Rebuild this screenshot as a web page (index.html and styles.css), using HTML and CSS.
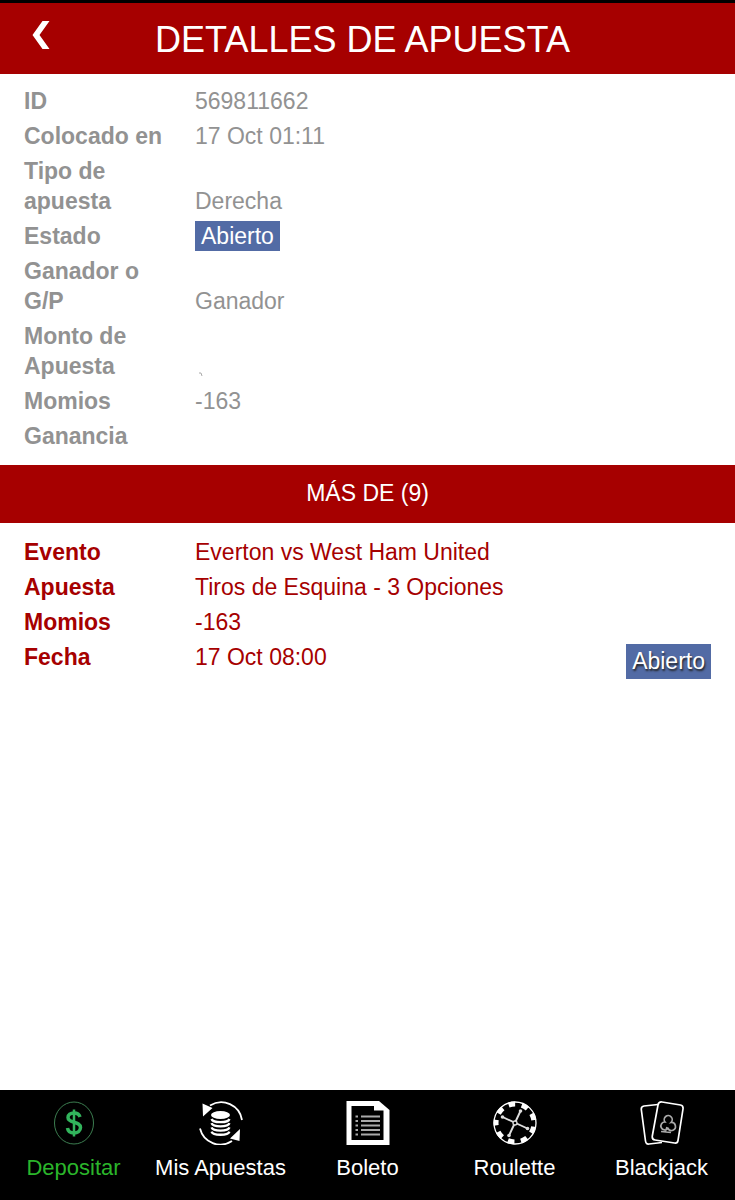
FILE: index.html
```html
<!DOCTYPE html>
<html lang="es">
<head>
    <meta charset="UTF-8">
    <meta name="viewport" content="width=device-width, initial-scale=1.0">
    <title>Detalles de apuesta</title>
    <link rel="stylesheet" href="styles.css">
</head>
<body>
    <header class="header">
        <button class="back" type="button" aria-label="Volver">
            <svg width="18" height="28" viewBox="0 0 18 28"><path d="M10.500 0H17.500L7.500 14L17.500 28H10.500L0.500 14Z" fill="#fff"/></svg>
        </button>
        <h1 class="title">DETALLES DE APUESTA</h1>
    </header>

    <main class="content">
        <dl class="details">
            <div class="row"><dt>ID</dt><dd>569811662</dd></div>
            <div class="row"><dt>Colocado en</dt><dd>17 Oct 01:11</dd></div>
            <div class="row"><dt>Tipo de apuesta</dt><dd>Derecha</dd></div>
            <div class="row"><dt>Estado</dt><dd><span class="badge">Abierto</span></dd></div>
            <div class="row"><dt>Ganador o G/P</dt><dd>Ganador</dd></div>
            <div class="row">
                <dt>Monto de Apuesta</dt>
                <dd><svg class="mark" width="10" height="5" viewBox="0 0 10 5"><path d="M4 1H6L7 4" fill="none" stroke="#aaa"/></svg></dd>
            </div>
            <div class="row"><dt>Momios</dt><dd>-163</dd></div>
            <div class="row"><dt>Ganancia</dt><dd></dd></div>
        </dl>

        <h2 class="section-title">MÁS DE (9)</h2>

        <section class="event">
            <dl class="event-list">
                <div class="row"><dt>Evento</dt><dd>Everton vs West Ham United</dd></div>
                <div class="row"><dt>Apuesta</dt><dd>Tiros de Esquina - 3 Opciones</dd></div>
                <div class="row"><dt>Momios</dt><dd>-163</dd></div>
                <div class="row"><dt>Fecha</dt><dd>17 Oct 08:00</dd></div>
            </dl>
            <span class="badge badge-large">Abierto</span>
        </section>
    </main>

    <nav class="nav">
        <a class="nav-item nav-active" href="#depositar">
            <svg class="icon" viewBox="0 0 44 44" fill="none">
                <ellipse cx="22" cy="22" rx="19.500" ry="21" stroke="#3c7d50"/>
                <path d="M28 16C27 12.500 24.500 12 22 12C18.500 12 16 13.800 16 16.600C16 23 28.500 19.500 28.500 26.600C28.500 30 25.500 32 22 32C18.500 32 16 30.500 15.500 27" stroke="#32b45c" stroke-width="3.500"/>
                <path d="M22 8.500V35.500" stroke="#32b45c" stroke-width="2.500"/>
            </svg>
            <span>Depositar</span>
        </a>
        <a class="nav-item" href="#apuestas">
            <svg class="icon" viewBox="0 0 44 44" fill="none">
                <path d="M11 4.500A21 21 0 0 1 43 19" stroke="#fff" stroke-width="1.800"/>
                <path d="M1 27.500A21 21 0 0 0 33 40" stroke="#fff" stroke-width="1.800"/>
                <path d="M3.500 2.500L13.500 7L4 15.500ZM41 28L31 37.500L40.500 40Z" fill="#fff"/>
                <ellipse cx="21.500" cy="14" rx="9.500" ry="4" fill="#fff"/>
                <path d="M12.500 18C14 22.200 29 22.200 30.500 18M12.500 22.200C14 26.400 29 26.400 30.500 22.200M12.500 26.400C14 30.600 29 30.600 30.500 26.400M12.500 30.600C14 34.800 29 34.800 30.500 30.600" stroke="#fff" stroke-width="2.300"/>
            </svg>
            <span>Mis Apuestas</span>
        </a>
        <a class="nav-item" href="#boleto">
            <svg class="icon" viewBox="0 0 44 44" fill="none">
                <path d="M.500 0H33L43.500 9V44H.500Z" fill="#fff"/>
                <path d="M5.500 5H28V9.500H37.500V39H5.500Z" fill="#000"/>
                <path d="M9.500 15.500H12M9.500 20H12M9.500 24.500H12M9.500 29H12M9.500 33.500H12M15 15.500H34M15 20H34M15 24.500H34M15 29H34M15 33.500H34" stroke="#aaa" stroke-width="2.200"/>
            </svg>
            <span>Boleto</span>
        </a>
        <a class="nav-item" href="#roulette">
            <svg class="icon" viewBox="0 0 44 44" fill="none">
                <circle cx="22" cy="22" r="21" stroke="#fff" stroke-width="1.300"/>
                <circle cx="22" cy="22" r="19" stroke="#fff" stroke-width="5" stroke-dasharray="6.600 6.664" stroke-dashoffset="3.300" transform="rotate(180 22 22)"/>
                <path d="M27.500 10L16 34.500M9.500 16L34.500 27.500" stroke="#ddd" stroke-width="1.900"/>
                <circle cx="22" cy="22" r="2" fill="#000" stroke="#ddd" stroke-width="1.300"/>
                <g fill="#ddd"><circle cx="27.500" cy="10" r="1.800"/><circle cx="16" cy="34.500" r="1.800"/><circle cx="9.500" cy="16" r="1.800"/><circle cx="34.500" cy="27.500" r="1.800"/></g>
            </svg>
            <span>Roulette</span>
        </a>
        <a class="nav-item" href="#blackjack">
            <svg class="icon" viewBox="0 0 44 44" fill="none" stroke="#fff" stroke-width="1.700">
                <path d="M18 3.500L4 5Q1 5.500 1.300 8.500L5.500 40Q6 43.500 9 43L22 41.500"/>
                <path d="M22 1L40.500 4Q43.500 4.600 43 8L38 39.500Q37.500 42.500 34.500 42L15 39Q11.800 38.500 12.300 35L18 4Q18.700 .600 22 1Z"/>
                <path d="M25 21A4 4 0 1 1 31 21.500A4 4 0 1 1 28 27.500A4 4 0 1 1 25 21ZM27 26L25.500 30.500M21 30.500L31 31.500" stroke="#aaa"/>
            </svg>
            <span>Blackjack</span>
        </a>
    </nav>
</body>
</html>
```
FILE: styles.css
```css
* {
    box-sizing: border-box;
}
body {
    margin: 0;
    min-height: 100vh;
    display: flex;
    flex-direction: column;
    font-family: "Liberation Sans", Arial, sans-serif;
    font-size: 23px;
    line-height: 30px;
    background-color: #fff;
}
.header {
    display: grid;
    grid-template-columns: 82px 1fr 92px;
    align-items: center;
    height: 74px;
    border-top: 3px solid #000;
    background-color: #a60000;
    color: #fff;
}
.back {
    display: flex;
    justify-content: center;
    padding: 0 0 8px;
    border: none;
    background: none;
    cursor: pointer;
}
.title {
    margin: 0;
    padding-top: 2px;
    font-size: 36px;
    font-weight: normal;
    line-height: 40px;
    text-align: center;
}
.content {
    flex: 1;
}
dl, dd {
    margin: 0;
}
.details, .event-list {
    display: flex;
    flex-direction: column;
    gap: 5px;
}
.details {
    padding: 12px 24px 14px;
    color: #929292;
}
.row {
    display: grid;
    grid-template-columns: 147px 1fr;
    column-gap: 24px;
    align-items: end;
}
.row dt {
    font-weight: bold;
}
.mark {
    display: block;
    margin-bottom: 4px;
}
.badge {
    display: inline-block;
    padding: 0 6px;
    background-color: #526ba5;
    color: #fff;
}
.badge-large {
    line-height: 35px;
    text-shadow: 1px 2px 2px #222;
}
.section-title {
    margin: 0;
    padding: 13px 24px 15px;
    background-color: #a60000;
    color: #fff;
    font-size: 23px;
    font-weight: normal;
    text-align: center;
}
.event {
    display: flex;
    justify-content: space-between;
    align-items: flex-end;
    padding: 14px 24px;
    color: #a60000;
}
.event-list {
    padding-bottom: 7px;
}
.nav {
    display: grid;
    grid-template-columns: repeat(5, 1fr);
    height: 110px;
    padding-top: 11px;
    background-color: #000;
}
.nav-item {
    display: flex;
    flex-direction: column;
    align-items: center;
    gap: 8px;
    color: #fff;
    font-size: 22px;
    text-decoration: none;
    white-space: nowrap;
}
.nav-active {
    color: #2bb52b;
}
.icon {
    width: 44px;
    height: 44px;
}
```
